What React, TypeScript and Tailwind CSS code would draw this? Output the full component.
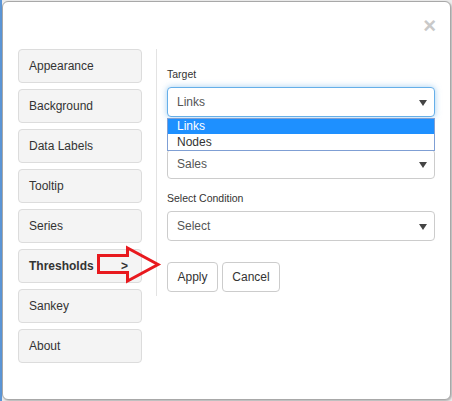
import React from "react";

const tabs = [
  "Appearance",
  "Background",
  "Data Labels",
  "Tooltip",
  "Series",
  "Thresholds",
  "Sankey",
  "About",
];

const Caret = () => (
  <svg width="8" height="6" viewBox="0 0 8 6" className="absolute right-[7px] top-[12px]">
    <path d="M0 0 H8 L4 6 Z" fill="#444" />
  </svg>
);

const SelectBox = ({
  value,
  focused,
}: {
  value: string;
  focused?: boolean;
}) => (
  <div
    className={`relative h-[30px] rounded-[4px] border bg-white flex items-center pl-[9px] text-[12px] text-[#555] ${
      focused
        ? "border-[#66afe9] shadow-[0_0_6px_rgba(102,175,233,0.6)]"
        : "border-[#ccc]"
    }`}
  >
    {value}
    <Caret />
  </div>
);

const App = () => {
  return (
    <div
      className="relative w-[452px] h-[401px] flex bg-[#ececec] overflow-hidden"
      style={{ fontFamily: '"Liberation Sans", Arial, sans-serif' }}
    >
      <div className="w-[2px] h-full bg-[#5b95d6]" />
      <div className="mt-[1px] w-[449px] h-[399px] bg-white border border-[#a8a8a8] rounded-[6px] shadow-[1px_1px_2px_rgba(0,0,0,0.25)] flex flex-col">
        <div className="h-[47px] flex justify-end items-center pr-[14px]">
          <span className="text-[22px] font-bold leading-none text-[#c9c9c9]">
            ×
          </span>
        </div>

        <div className="flex pl-[15px]">
          <div className="w-[124px] flex flex-col gap-[6px]">
            {tabs.map((t) => (
              <div
                key={t}
                className={`h-[34px] rounded-[4px] border border-[#dcdcdc] bg-[#f4f4f4] flex items-center justify-between pl-[10px] pr-[13px] text-[12px] text-[#333] ${
                  t === "Thresholds" ? "font-bold text-[#222]" : ""
                }`}
              >
                <span>{t}</span>
                {t === "Thresholds" && <span>&gt;</span>}
              </div>
            ))}
          </div>

          <div className="ml-[14px] w-px h-[247px] bg-[#e3e3e3]" />

          <div className="ml-[10px] w-[268px] pt-[18px]">
            <div className="h-[16px] mb-[4px] flex items-center text-[10.5px] text-[#333]">
              Target
            </div>
            <div className="relative">
              <SelectBox value="Links" focused />
              <div className="absolute left-0 right-0 top-[31px] z-10 bg-white border border-[#7f9fd4] text-[12px]">
                <div className="h-[15px] leading-[15px] pl-[9px] bg-[#1e90ff] text-white">
                  Links
                </div>
                <div className="h-[16px] leading-[16px] pl-[9px] text-[#333]">
                  Nodes
                </div>
              </div>
            </div>
            <div className="mt-[32px]">
              <SelectBox value="Sales" />
            </div>
            <div className="h-[16px] mt-[12px] mb-[4px] flex items-center text-[10.5px] text-[#333]">
              Select Condition
            </div>
            <SelectBox value="Select" />
            <div className="mt-[21px] flex gap-[4px]">
              <button className="h-[30px] w-[51px] rounded-[4px] border border-[#ccc] bg-white text-[12px] text-[#333]">
                Apply
              </button>
              <button className="h-[30px] w-[58px] rounded-[4px] border border-[#ccc] bg-white text-[12px] text-[#333]">
                Cancel
              </button>
            </div>
          </div>
        </div>
      </div>

      <svg
        className="absolute left-0 top-0 pointer-events-none"
        width="452"
        height="401"
      >
        <polygon
          points="98.5,255.5 127.5,255.5 127.5,248 158,264.5 127.5,281 127.5,272.5 98.5,272.5"
          fill="none"
          stroke="#e8191e"
          strokeWidth="3"
        />
      </svg>
    </div>
  );
};

export default App;
